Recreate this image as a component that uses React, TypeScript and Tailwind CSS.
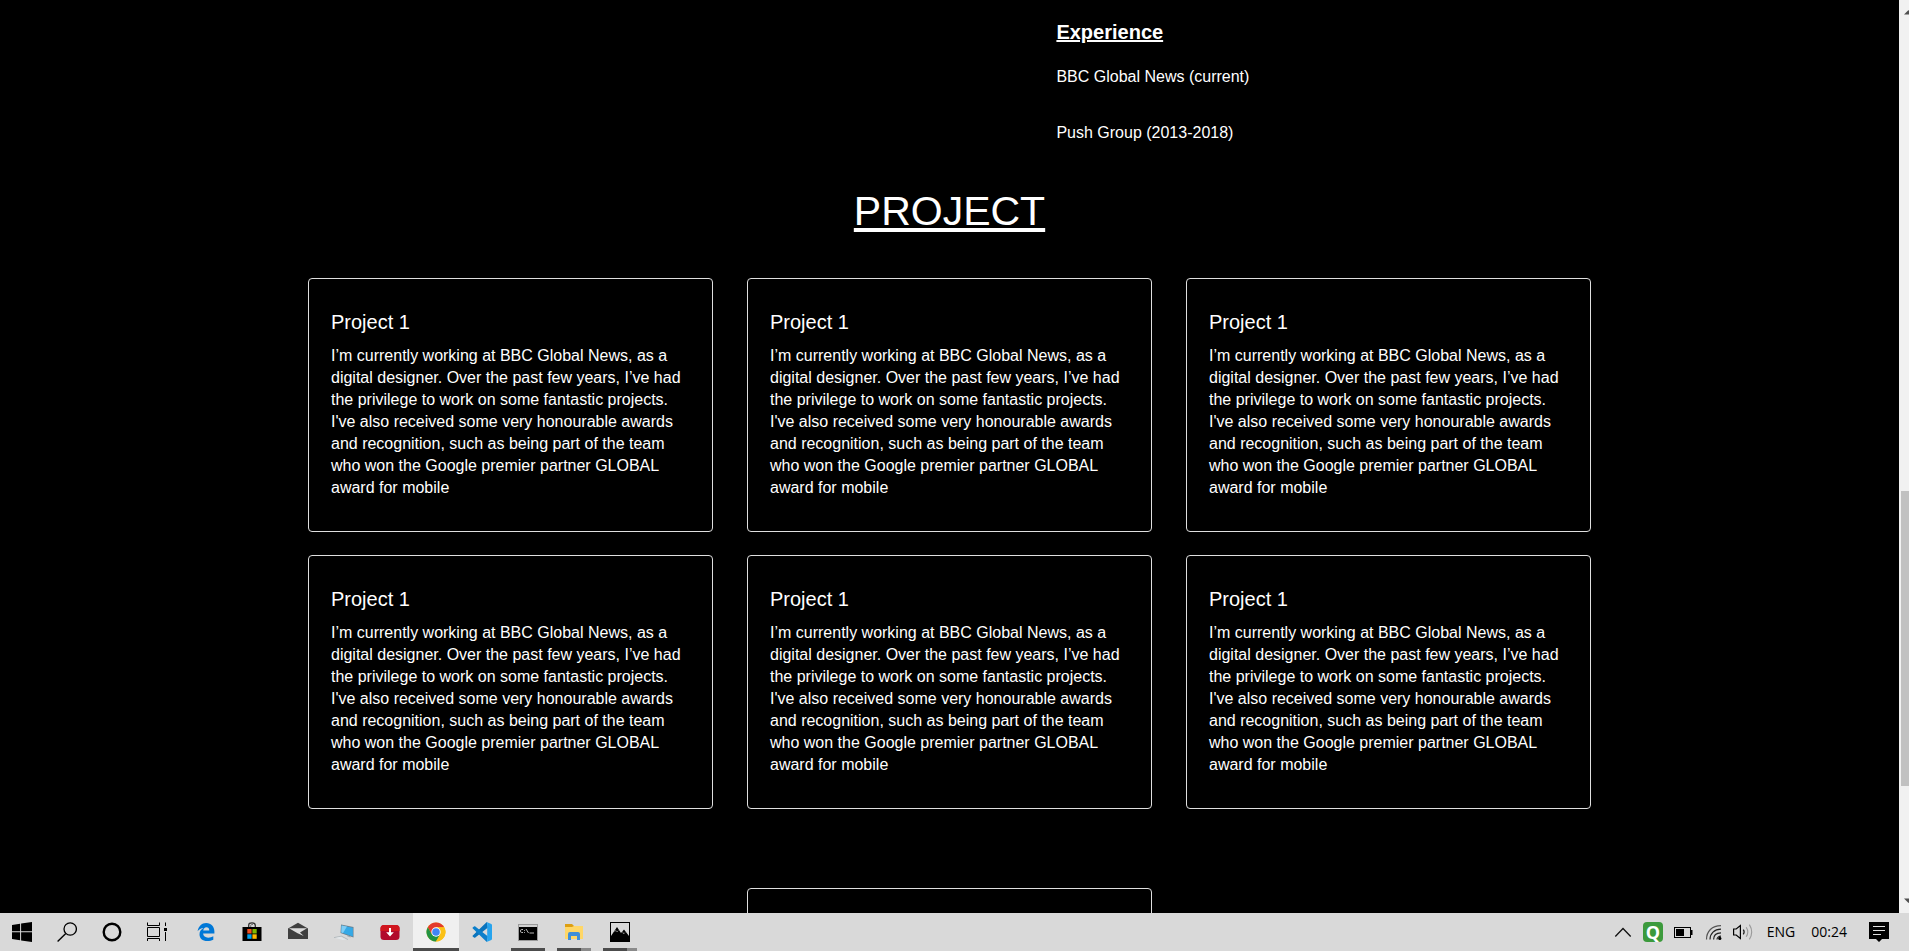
import React from "react";

const DESCRIPTION =
  "I’m currently working at BBC Global News, as a digital designer. Over the past few years, I’ve had the privilege to work on some fantastic projects. I've also received some very honourable awards and recognition, such as being part of the team who won the Google premier partner GLOBAL award for mobile";

const projects = Array.from({ length: 6 }, (_, i) => ({
  id: i,
  title: "Project 1",
  text: DESCRIPTION,
}));

function Svg({ children }: { children: React.ReactNode }) {
  return (
    <svg className="block size-5" viewBox="0 0 20 20" fill="none" aria-hidden="true">
      {children}
    </svg>
  );
}

const WindowsIcon = () => (
  <Svg>
    <path
      fill="#000"
      d="M0 2.9 8.1 1.7V9.2H0zM9.1 1.5 20 0V9.2H9.1zM0 10.2H8.1V18.2L0 17.1zM9.1 10.2H20V20L9.1 18.4z"
    />
  </Svg>
);

const SearchIcon = () => (
  <Svg>
    <circle cx="13.2" cy="7" r="6.2" stroke="#000" strokeWidth="1.3" />
    <path d="M8.8 11.4 0.6 19.4" stroke="#000" strokeWidth="1.4" />
  </Svg>
);

const CortanaIcon = () => (
  <Svg>
    <circle cx="10" cy="10" r="8.3" stroke="#000" strokeWidth="2.4" />
  </Svg>
);

const TaskViewIcon = () => (
  <Svg>
    <path
      stroke="#000"
      d="M.5.5V3.5H12.5V.5M.5 5.5H12.5V14.5H.5zM.5 19V16.5H12.5V19M18.5.5V4M18.5 10V19"
    />
    <rect x="17" y="6" width="3" height="3" fill="#000" />
  </Svg>
);

const EdgeIcon = () => (
  <Svg>
    <path
      fill="#0078d7"
      d="M1.6 9.3C2.5 4.1 5.8 1 10.2 1 15.3 1 18.4 4.6 18.4 9.6V11.6H7.1C7.2 14.4 9.4 15.7 12.2 15.7 14.2 15.7 15.9 15.1 17.3 14.3V17.7C15.6 18.6 13.6 19 11.4 19 6.3 19 3.5 16.1 3.5 12.4 3.5 9.6 5 7.4 7.6 6.1 5.1 6.3 3 7.4 1.6 9.3ZM7.2 8.5H13.3C13.3 6.4 12.3 5.2 10.4 5.2 8.7 5.2 7.5 6.6 7.2 8.5Z"
    />
  </Svg>
);

const StoreIcon = () => (
  <Svg>
    <path d="M6.7 6V3.2Q6.7.8 10 .8T13.3 3.2V6" stroke="#333" strokeWidth="1.3" />
    <path d="M8.7 5V3.4Q8.7 2.4 11 2.4" stroke="#666" strokeWidth=".9" />
    <rect x="0.5" y="5" width="19" height="14" fill="#000" />
    <rect x="5.3" y="7" width="4.3" height="4.5" fill="#f25022" />
    <rect x="10.4" y="7" width="4.3" height="4.5" fill="#7fba00" />
    <rect x="5.3" y="12.3" width="4.3" height="4.5" fill="#00a4ef" />
    <rect x="10.4" y="12.3" width="4.3" height="4.5" fill="#ffb900" />
  </Svg>
);

const MailIcon = () => (
  <Svg>
    <path fill="#404040" d="M0 6.4 10 .8 20 6.4V17H0z" />
    <path fill="#dcdcdc" d="M1 6.2H19L12 10.4 15.8 14 9.6 11.3z" />
  </Svg>
);

const ComputerIcon = () => (
  <Svg>
    <path fill="#6b7f8d" d="M7 2.5 19.5 5V15.5L6.5 11z" />
    <path fill="#35a9e6" d="M7.6 3.4 18.9 5.8V14.5L7.3 10.6z" />
    <path fill="#7fcdf5" d="M7.6 3.4 13 4.6 9 11 7.3 10.6z" />
    <path d="M0 15.6 7.5 14.2 14 17.6" stroke="#a9b2b8" strokeWidth=".8" />
    <path d="M13 13.6 16.5 15" stroke="#9aa5ad" strokeWidth="1" />
    <path fill="#e3e7ea" d="M1.5 16 6.5 14.8 12.5 17.6 9 18z" />
  </Svg>
);

const DownloadIcon = () => (
  <Svg>
    <rect x="0.5" y="3" width="19" height="15" rx="3.5" fill="#b20a2c" />
    <path fill="#d0161f" d="M4 3H16Q19.5 3 19.5 6.5V9H.5V6.5Q.5 3 4 3z" />
    <path fill="#fff" d="M9 6H11V10.3H13.8L10 14.6 6.2 10.3H9z" />
  </Svg>
);

const ChromeIcon = () => (
  <Svg>
    <circle cx="10" cy="10" r="9.5" fill="#fbc116" />
    <path fill="#e33b2e" d="M1.77 5.25A9.5 9.5 0 0 1 18.23 5.25H10L5.9 12.4z" />
    <path fill="#229342" d="M1.77 5.25A9.5 9.5 0 0 0 10 19.5L14.1 12.4 5.9 12.4z" />
    <path fill="#fbc116" d="M18.23 5.25A9.5 9.5 0 0 1 10 19.5L14.2 12.3 10 5.25z" />
    <circle cx="10" cy="10" r="4.7" fill="#fff" />
    <circle cx="10" cy="10" r="3.8" fill="#4285f4" />
  </Svg>
);

const CodeIcon = () => (
  <Svg>
    <path fill="#0a74bd" d="M14.8 0 16 5.5 3 15.8Q2.5 16 2 15.6L.7 14.5Q.2 13.9.8 13.4z" />
    <path fill="#0c7fcb" d="M.8 6.6Q.2 6.1.7 5.5L2 4.4Q2.5 4 3 4.3L16 14.5 14.8 20z" />
    <path fill="#27a4ee" d="M14.6 0 19.3 2.1Q20 2.4 20 3.2V16.8Q20 17.6 19.3 17.9L14.6 20Q15.2 19.4 15.2 18.4V1.6Q15.2.6 14.6 0z" />
  </Svg>
);

const TerminalIcon = () => (
  <Svg>
    <rect x="0.5" y="2.5" width="19" height="16" fill="#000" stroke="#9a9a9a" />
    <rect x="1" y="3" width="18" height="2" fill="#d0d0d0" />
    <path
      d="M5 7.5H3.5Q2.5 7.5 2.5 9T3.5 10.5H5M6.5 8V8.8M6.5 10V10.8M8 7 10.5 11M11.5 11H16"
      stroke="#ccc"
      strokeWidth=".9"
    />
  </Svg>
);

const FolderIcon = () => (
  <Svg>
    <path fill="#dd9f13" d="M1 2H8L10 4V6H1z" />
    <path fill="#ffd767" d="M1 5H8L10 4H19V17H1z" />
    <path fill="#3f8fd9" d="M4 18V12Q4 10 6 10H14Q16 10 16 12V18H13V14H7V18z" />
  </Svg>
);

const PhotosIcon = () => (
  <Svg>
    <rect x="0.5" y="0.5" width="19" height="19" stroke="#000" />
    <path fill="#000" d="M1 14 7 5 11 11 14 7.5 19 14V19H1z" />
    <path d="M4.5 9.5 6 8.5 7 10 8.3 8.6M12.5 9.5 13.6 12 15 10.5" stroke="#d9d9d9" strokeWidth=".5" />
  </Svg>
);

const ChevronIcon = () => (
  <Svg>
    <path d="M2.3 14.5 10 6.5 17.7 14.5" stroke="#111" strokeWidth="1.3" />
  </Svg>
);

const QIcon = () => (
  <span className="flex size-5 items-center justify-center rounded-sm bg-[#3c9a3c] text-lg leading-none font-bold text-white">
    Q
  </span>
);

const BatteryIcon = () => (
  <Svg>
    <rect x="1.5" y="5.5" width="16" height="10" stroke="#000" />
    <rect x="3" y="7" width="8" height="7" fill="#000" />
    <rect x="18" y="8" width="1.5" height="5" fill="#000" />
  </Svg>
);

const WifiIcon = () => (
  <Svg>
    <g stroke="#222" strokeWidth="1.2">
      <path d="M3.5 17.5C3.5 9.5 9 3.6 18 3.6" stroke="#555" />
      <path d="M7 17.5C7 11.5 11.3 7.2 18 7.2" />
      <path d="M10.6 17.5C10.6 13.5 13.4 10.8 18 10.8" />
      <path d="M14 17.5C14 15.5 15.6 14.2 18 14.2" />
    </g>
    <circle cx="16.8" cy="16.4" r="1.6" fill="#000" />
  </Svg>
);

const SpeakerIcon = () => (
  <Svg>
    <path d="M.6 7H3.2L7.4 3.6V16.4L3.2 13H.6z" stroke="#000" strokeWidth="1.2" />
    <path d="M10.3 7.6Q12 10 10.3 12.4" stroke="#222" strokeWidth="1.2" />
    <path d="M13.2 5.2Q16.4 10 13.2 14.8M16.4 2.6Q21 10 16.4 17.4" stroke="#999" strokeWidth="1.1" />
  </Svg>
);

const NotificationIcon = () => (
  <Svg>
    <path fill="#000" d="M0 0H20V17H13L10 20 7 17H0z" />
    <path d="M4 4.5H16M4 8.5H16M4 12.5H12" stroke="#e0e0e0" />
  </Svg>
);

const systemButtons = [
  { label: "Start", icon: <WindowsIcon /> },
  { label: "Search", icon: <SearchIcon /> },
  { label: "Cortana", icon: <CortanaIcon /> },
  { label: "Task View", icon: <TaskViewIcon /> },
];

type App = { label: string; icon: React.ReactNode; state?: "active" | "open" | "stacked" };

const apps: App[] = [
  { label: "Edge", icon: <EdgeIcon /> },
  { label: "Store", icon: <StoreIcon /> },
  { label: "Mail", icon: <MailIcon /> },
  { label: "Computer", icon: <ComputerIcon /> },
  { label: "Downloader", icon: <DownloadIcon /> },
  { label: "Chrome", icon: <ChromeIcon />, state: "active" },
  { label: "Code editor", icon: <CodeIcon /> },
  { label: "Command prompt", icon: <TerminalIcon />, state: "open" },
  { label: "File Explorer", icon: <FolderIcon />, state: "stacked" },
  { label: "Photos", icon: <PhotosIcon />, state: "stacked" },
];

function AppButton({ label, icon, state }: App) {
  return (
    <button
      aria-label={label}
      className={`relative flex h-full w-[46px] items-center justify-center ${state === "active" ? "bg-[#f0f0f0]" : ""}`}
    >
      {icon}
      {state && (
        <span
          className={`absolute bottom-0 flex h-[3px] bg-[#4c4c4c] ${state === "active" ? "inset-x-0" : "inset-x-[6px]"}`}
        >
          {state === "stacked" && <span className="ml-auto w-[10px] bg-[#8a8a8a]" />}
        </span>
      )}
    </button>
  );
}

function Taskbar() {
  return (
    <footer className="flex h-[38px] shrink-0 items-center justify-between bg-[#d9d9d9] text-black">
      <nav className="flex h-full">
        <div className="mr-[3px] flex h-full">
          {systemButtons.map((b) => (
            <button key={b.label} aria-label={b.label} className="flex h-full w-[45px] items-center pl-[12px]">
              {b.icon}
            </button>
          ))}
        </div>
        {apps.map((a) => (
          <AppButton key={a.label} {...a} />
        ))}
      </nav>
      <div className="flex items-center pr-5 font-['Open_Sans',sans-serif] text-sm">
        <div className="flex gap-[10px]">
          <ChevronIcon />
          <QIcon />
          <BatteryIcon />
          <WifiIcon />
          <SpeakerIcon />
        </div>
        <span className="ml-[14px]">ENG</span>
        <time className="ml-4">00:24</time>
        <button aria-label="Notifications" className="ml-[22px]">
          <NotificationIcon />
        </button>
      </div>
    </footer>
  );
}

function Scrollbar() {
  return (
    <div className="flex w-[10px] shrink-0 flex-col justify-between overflow-hidden bg-[#f1f1f1] py-[10px]" aria-hidden="true">
      <svg className="ml-[5px] block h-[5px] w-[9px] shrink-0" viewBox="0 0 9 5">
        <path d="M0 4.5 4.5 0 9 4.5z" fill="#505050" />
      </svg>
      <div className="ml-[2px] flex grow flex-col">
        <div className="grow-[476]" />
        <div className="grow-[295] bg-[#c1c1c1]" />
        <div className="grow-[112]" />
      </div>
      <svg className="ml-[5px] block h-[5px] w-[9px] shrink-0" viewBox="0 0 9 5">
        <path d="M0 .5 4.5 5 9 .5z" fill="#505050" />
      </svg>
    </div>
  );
}

function ProjectCard({ title, text }: { title: string; text: string }) {
  return (
    <article className="rounded border border-[#dfdfdf] px-[22px] pt-[31px] pb-8">
      <h3 className="mb-[11px] text-xl leading-6">{title}</h3>
      <p className="text-base leading-[22px]">{text}</p>
    </article>
  );
}

export default function App() {
  return (
    <div className="flex h-screen flex-col bg-black font-['Liberation_Sans',Arial,sans-serif] text-white">
      <div className="flex min-h-0 flex-1">
        <main className="min-w-0 flex-1 overflow-hidden">
          <div className="mx-auto max-w-[1283px]">
            <section className="grid grid-cols-12 pt-5">
              <div className="col-span-5 col-start-8">
                <h2 className="text-xl leading-6 font-bold underline">Experience</h2>
                <p className="mt-[21px] leading-6">BBC Global News (current)</p>
                <p className="mt-8 leading-6">Push Group (2013-2018)</p>
              </div>
            </section>
            <h1 className="mt-[42px] text-center text-[41px] leading-12 underline">PROJECT</h1>
            <section className="mt-[43px] grid grid-cols-3 gap-x-[34px] gap-y-[23px]">
              {projects.map((p) => (
                <ProjectCard key={p.id} title={p.title} text={p.text} />
              ))}
            </section>
            <section className="mt-[79px] grid grid-cols-3 gap-x-[34px]">
              <article className="col-start-2 h-64 rounded border border-[#dfdfdf]" />
            </section>
          </div>
        </main>
        <Scrollbar />
      </div>
      <Taskbar />
    </div>
  );
}
